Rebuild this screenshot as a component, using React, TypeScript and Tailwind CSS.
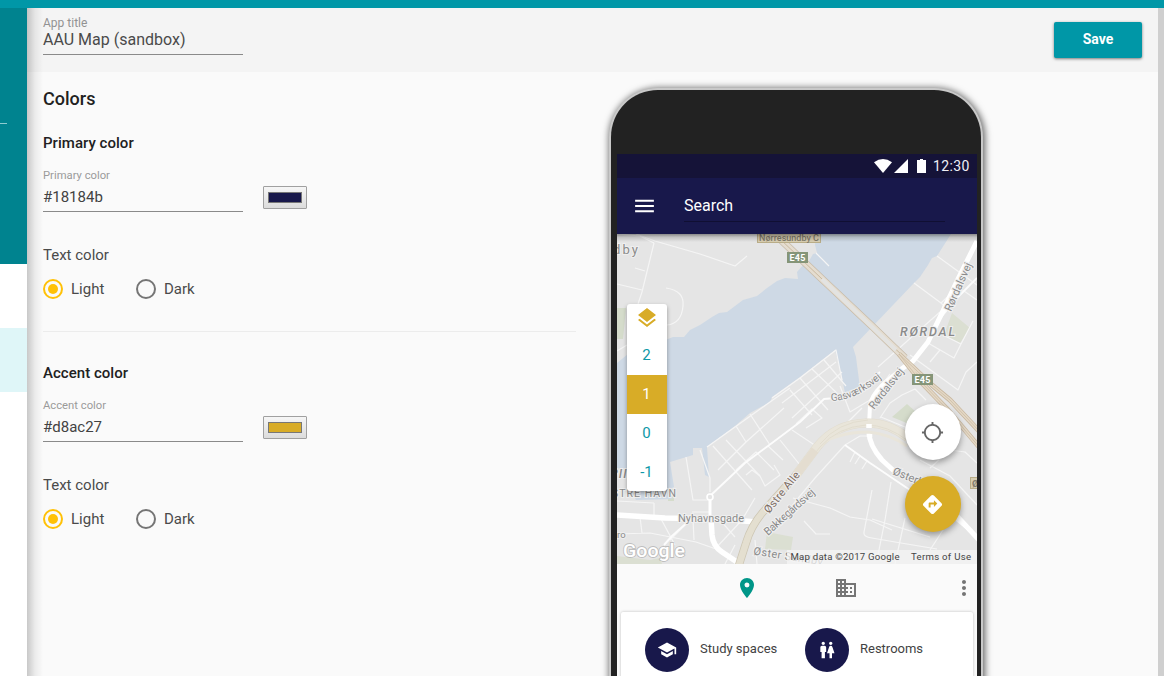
import React from "react";
import {
  MdBusiness,
  MdDirections,
  MdLayers,
  MdLocationSearching,
  MdMenu,
  MdMoreVert,
  MdPlace,
  MdSchool,
  MdWc,
} from "react-icons/md";

function Radio({ label, checked }: { label: string; checked?: boolean }) {
  return (
    <div className="flex items-center gap-2">
      <span
        className={
          checked
            ? "flex size-5 items-center justify-center rounded-full border-2 border-[#ffc107]"
            : "flex size-5 items-center justify-center rounded-full border-2 border-[#757575]"
        }
      >
        {checked && <span className="size-2.5 rounded-full bg-[#ffc107]" />}
      </span>
      <span className="text-[15px] leading-5 text-[#4a4a4a]">{label}</span>
    </div>
  );
}

function ColorSection({ title, value, swatch }: { title: string; value: string; swatch: string }) {
  return (
    <section>
      <h3 className="text-[15px] leading-5 font-medium tracking-[0.03px] text-[#212121]">{title}</h3>
      <div className="mt-[15px] flex gap-5">
        <div className="w-[200px]">
          <div className="h-4 text-[11.25px] leading-[15px] text-[#9a9a9a]">{title}</div>
          <div className="h-7 border-b border-[#8a8a8a] text-[15px] leading-[26px] text-[#424242]">{value}</div>
        </div>
        <div className="mt-[18px] flex h-[23px] w-11 items-center justify-center rounded-[1px] border border-[#a0a0a0] bg-linear-to-b from-[#f6f6f6] to-[#dcdcdc]">
          <div className="h-[11px] w-[34px] border border-[#777]" style={{ backgroundColor: swatch }} />
        </div>
      </div>
      <div className="mt-[33px] text-[15px] leading-5 text-[#4a4a4a]">Text color</div>
      <div className="mt-3.5 flex">
        <div className="w-[93px]">
          <Radio label="Light" checked />
        </div>
        <Radio label="Dark" />
      </div>
    </section>
  );
}

const thinStreets = [
  "M636 234L655 241L700 254L735 266L747 256",
  "M654 243L642 292L638 304",
  "M617 234L640 236L654 243M635 268L645 271",
  "M617 284L642 290",
  "M666 288C680 290 684 297 683 306C682 317 678 324 667 325",
  "M617 351L627 345",
  "M937 256L977 285M914 283L941 303L950 312M941 303L955 290L964 291L977 300",
  "M928 343L954 358L961 344L943 335M954 358L961 344L973 321M928 343L940 350L930 362",
  "M878 367L895 352L915 334L940 312",
  "M772 398L800 378L836 350L842 380",
  "M790 390L812 415M800 378L828 410M812 369L842 398M824 360L846 386M782 403L836 362M792 418L842 372",
  "M707 447L770 402L790 388",
  "M713 446L752 490M726 440L760 476M736 426L746 442L784 408M750 414L770 445M718 470L746 442M736 470L756 452L774 470M700 450L710 478L710 492",
  "M746 475L752 470L760 476L765 486L780 475L774 465M780 440L800 465M792 430L816 446M768 446L783 460M796 424L812 409L822 418L806 428",
  "M686 457L693 500L710 500M617 501L654 503M654 503L654 515M692 512L710 512",
  "M617 534L650 533L696 542L716 549M670 540L680 530L692 518M660 517L675 545M693 519L694 540M640 517L642 533",
  "M715 549L742 520L755 498M720 520L735 537M725 564L735 545",
  "M845 445L815 478L795 502L785 515M845 445L860 436L871 436M855 452L850 462M860 456L855 464M867 461L862 469",
  "M793 498L830 508L850 517L870 520L892 530M804 521L816 534L830 534M872 490L864 532Q863 537 872 538L895 542L937 549",
  "M891 482L885 520L877 560M905 518L895 564M872 519L930 537M930 550L943 530L955 500",
  "M920 460L950 476M930 468L950 450L965 452L977 463M880 418L890 403L902 395L915 389L926 400",
  "M840 386L850 412L870 400M845 425L862 408",
  "M870 405L884 382L890 374M881 417L905 427M910 355L958 390L966 372L977 362",
  "M950 476L977 505M755 540L757 564",
];

const mediumStreets = [
  "M710 496L745 463L772 443L800 422L824 399L836 398L860 391L880 372",
  "M845 445L870 463L907 488L955 519L977 537",
  "M977 278L955 300L935 325",
  "M690 520L672 536L664 545",
];

const mapLabel = { paintOrder: "stroke" as const, stroke: "#efefef", strokeWidth: 2.2 };

function CityMap() {
  return (
    <svg className="block h-[330px] w-[360px] font-['Roboto',sans-serif]" viewBox="617 234 360 330">
      <defs>
        <linearGradient id="topShade" x1="0" y1="0" x2="0" y2="1">
          <stop offset="0" stopColor="#000" stopOpacity="0.4" />
          <stop offset="0.4" stopColor="#000" stopOpacity="0.15" />
          <stop offset="1" stopColor="#000" stopOpacity="0" />
        </linearGradient>
      </defs>
      <rect x="617" y="234" width="360" height="330" fill="#e5e5e5" />
      <g fill="#d5dccb">
        <path d="M617 308L626 308L623 339L617 339Z" />
        <path d="M892 417L907 404L916 412L909 424Z" />
        <path d="M668 489L674 489L674 501L668 501Z" />
      </g>
      <g fill="#dbdfd2">
        <path d="M952 313L970 328L960 343L944 335Z" />
        <path d="M767 532L793 537L791 550L765 549Z" />
        <path d="M617 556L650 560L660 558L662 564L617 564Z" />
      </g>
      <path
        fill="#ced9e5"
        d="M617 363L628 354L655 344L668 339L673 337L684 337L690 330L700 325L712 317L719 313L727 312L735 306L743 300L757 296L767 288L777 281L785 278L798 279L797 272L803 265L809 261L813 254L817 253L815 245L816 234L951 234L944 245L937 256L932 258L928 265L920 277L914 283L853 347L856 357L860 388L845 393L842 377L835 350L800 377L772 397L770 402L750 413L735 426L707 447L709 477L705 475L702 448L693 448L693 455L670 462L674 487L670 489L672 499L636 500L631 490L627 470L617 468Z"
      />
      <g fill="none" stroke="#f5f5f5" strokeWidth="1.2" strokeLinejoin="round">
        {thinStreets.map((d) => (
          <path key={d} d={d} />
        ))}
        <path d="M816 253L829 266" />
      </g>
      <g fill="none" stroke="#fcfcfc" strokeWidth="1.9" strokeLinejoin="round">
        {mediumStreets.map((d) => (
          <path key={d} d={d} />
        ))}
      </g>
      <g fill="none" stroke="#fff" strokeLinejoin="round">
        <path strokeWidth="5" d="M977 241L958 279L941 315L928 342L913 361L900 370" />
        <path strokeWidth="4" d="M903 368C888 379 872 392 870 405L869 426" />
        <path strokeWidth="5" d="M869 432Q869 445 882 460L894 471" />
        <path strokeWidth="3" d="M892 469L920 485L955 516" />
        <path strokeWidth="5" d="M955 514L980 541" />
        <path strokeWidth="5.5" d="M617 515L665 518L720 519L756 522" />
        <path strokeWidth="5.5" d="M711 518L712 535Q713 546 722 552L740 564" />
        <path strokeWidth="3" d="M710 497L710 520" />
      </g>
      <circle cx="710" cy="497" r="3" fill="#e5e5e5" stroke="#fff" strokeWidth="1.6" />

      <g fill="none">
        <path stroke="#e1dccf" strokeWidth="9" d="M796 475L817 447Q835 424 866 423Q888 422 908 438" />
        <path stroke="#e9e5da" strokeWidth="8" d="M796 475L817 447Q835 424 866 423Q888 422 908 438" />
        <path stroke="#e9e5da" strokeWidth="3" d="M814 448Q836 432 868 432Q890 434 907 446" />
        <path stroke="#dfdacc" strokeWidth="0.8" d="M800 472L820 447Q838 427 866 425Q888 425 908 441M820 444Q838 422 868 420" />
        <path stroke="#cdc6b3" strokeWidth="8" d="M738 568L746 543Q751 526 763 512L797 474" />
        <path stroke="#e4dfd0" strokeWidth="6.5" d="M738 568L746 543Q751 526 763 512L797 474" />
        <path stroke="#e4ddd0" strokeWidth="8" d="M796 475L815 450" />
        <path stroke="#fff" strokeWidth="5.5" d="M869 424V428M869.5 434V437" />
      </g>
      <g fill="none" strokeLinejoin="round">
        <path stroke="#c8bcaa" strokeWidth="7.5" d="M779 238L822 279L874 328L905 358" />
        <path stroke="#e5ddd0" strokeWidth="6" d="M779 238L822 279L874 328L905 358" />
        <path stroke="#c9b99f" strokeWidth="1" d="M779 238L822 279L905 358" />
        <path stroke="#c8b79f" strokeWidth="5" d="M899 354L932 385L950 400L980 432M899 354L922 383L948 410L980 448" />
        <path stroke="#e4d8c6" strokeWidth="3.5" d="M899 354L932 385L950 400L980 432M899 354L922 383L948 410L980 448" />
        <path stroke="#c9b99f" strokeWidth="0.7" d="M899 354L932 385L950 400L980 432M899 354L922 383L948 410L980 448" />
        <path stroke="#e3e3e1" strokeWidth="4" d="M822 279L896 350" />
      </g>

      <g>
        <rect x="757.5" y="232" width="63" height="10.5" fill="#d8ceb2" stroke="#b9ad88" />
        <text x="759" y="241" fontSize="9" fontWeight="500" fill="#817c6d" textLength="60">Nørresundby C</text>
        <rect x="787" y="252" width="21" height="11" fill="#859578" />
        <text x="789.5" y="260.7" fontSize="9" fontWeight="700" fill="#fff" textLength="16">E45</text>
        <rect x="912" y="374" width="21" height="11" fill="#859578" />
        <text x="914.5" y="382.7" fontSize="9" fontWeight="700" fill="#fff" textLength="16">E45</text>
        <rect x="970.5" y="477.5" width="14" height="11" fill="#d8ceb2" stroke="#b9ad88" />
        <text x="972" y="487" fontSize="9" fontWeight="700" fill="#817c6d">Ø</text>
      </g>

      <g fill="#8a8a8a" fontSize="11" style={mapLabel}>
        <text x="613" y="254" fontSize="13" textLength="25">dby</text>
        <text x="900" y="335.5" fontSize="12.5" fontStyle="italic" fontWeight="500" textLength="55">RØRDAL</text>
        <text x="610" y="477.5" fontSize="12.5" fontStyle="italic" fontWeight="500" letterSpacing="1">PII</text>
        <text x="612" y="497" fontSize="10.5" textLength="64">STRE HAVN</text>
        <text x="678" y="521.5" textLength="66">Nyhavnsgade</text>
        <text x="617" y="538" fontSize="9.5">ro</text>
        <text transform="translate(951 312) rotate(-66)" textLength="52">Rørdalsvej</text>
        <text transform="translate(874 410) rotate(-52)" textLength="49">Rørdalsvej</text>
        <path id="gas" d="M831 401Q857 401 886 374" fill="none" stroke="none" />
        <text fontSize="10.5">
          <textPath href="#gas" textLength="57">Gasværksvej</textPath>
        </text>
        <text transform="translate(768 536) rotate(-42)" textLength="64">Bakkegårdsvej</text>
        <text transform="translate(892 474) rotate(22)">Østerbro</text>
        <text transform="translate(753 554.5) rotate(9)" textLength="70">Øster Sundby</text>
        <text transform="translate(769 514) rotate(-51)" fill="#7d6c62" textLength="50">Østre Alle</text>
      </g>

      <rect x="787" y="550" width="190" height="14" fill="#f5f5f5" fillOpacity="0.72" />
      <text x="790.5" y="560" fontSize="9.6" fill="#444" textLength="109">Map data ©2017 Google</text>
      <text x="911" y="560" fontSize="9.6" fill="#444" textLength="60">Terms of Use</text>
      <text
        x="623"
        y="557"
        fontSize="19"
        fontWeight="500"
        fill="#fff"
        stroke="#8d8d8d"
        strokeOpacity="0.45"
        strokeWidth="1.8"
        style={{ paintOrder: "stroke" }}
        textLength="62"
        lengthAdjust="spacingAndGlyphs"
      >
        Google
      </text>
      <rect x="617" y="234" width="360" height="8" fill="url(#topShade)" />
    </svg>
  );
}

function LevelPicker() {
  return (
    <div className="absolute top-[70px] left-2.5 flex w-10 flex-col overflow-hidden rounded-[3px] bg-white pr-px text-center text-[15px] leading-[39px] text-[#0e98a7] shadow-[0_2px_4px_rgba(0,0,0,0.35)]">
      <div className="-mr-px flex h-8 items-center justify-center pb-1">
        <MdLayers className="size-6 text-[#d8ac27]" />
      </div>
      <div className="h-[39px]">2</div>
      <div className="-mr-px h-[39px] bg-[#d8ac27] pr-px text-white">1</div>
      <div className="h-[39px]">0</div>
      <div className="h-[38px]">-1</div>
    </div>
  );
}

function Category({ icon, label }: { icon: React.ReactNode; label: string }) {
  return (
    <div className="flex w-40 items-center gap-[11px]">
      <span className="flex size-11 items-center justify-center rounded-full bg-[#18184b] text-white">{icon}</span>
      <span className="pb-0.5 text-[13px] text-[#424242]">{label}</span>
    </div>
  );
}

function Phone() {
  return (
    <div className="mt-[18px] h-[700px] w-[370px] shrink-0 rounded-t-[47px] bg-[#222] pt-16 pr-1 pl-1.5 shadow-[0_0_0_2px_#c9c9c9,1px_1px_7px_3px_rgba(0,0,0,0.6)]">
      <div className="bg-[#fafafa]">
        <div className="flex h-6 items-center bg-[#151338] pl-[257px]">
          <svg className="h-3.5 w-[18px] fill-white" viewBox="0 0 18 14">
            <path d="M0 3.2Q9 -3.2 18 3.2L9 14Z" />
          </svg>
          <svg className="ml-0.5 h-3.5 w-3.5 fill-white" viewBox="0 0 14 14">
            <path d="M14 0V14H0Z" />
          </svg>
          <svg className="ml-[9px] h-3.5 w-[9px] fill-white" viewBox="0 0 9 14">
            <path d="M3 0H6V1H9V14H0V1H3Z" />
          </svg>
          <span className="ml-[7px] text-sm tracking-[0.35px] text-[#f0f0f6]">12:30</span>
        </div>
        <div className="flex h-14 items-center bg-[#18184b] pl-[15px] text-white">
          <MdMenu className="size-[25px] -translate-y-[0.5px]" />
          <div className="ml-[27px] h-8 w-[261px] border-b border-[#100f33] text-base leading-[31px]">Search</div>
        </div>
        <div className="relative">
          <CityMap />
          <LevelPicker />
          <div className="absolute top-[170px] right-4 flex size-14 items-center justify-center rounded-full bg-white pr-px text-[#666] shadow-[0_3px_6px_rgba(0,0,0,0.35)]">
            <MdLocationSearching className="size-[23px]" />
          </div>
          <div className="absolute top-[242px] right-4 flex size-14 items-center justify-center rounded-full bg-[#d8ac27] pr-px text-white shadow-[0_3px_6px_rgba(0,0,0,0.35)]">
            <MdDirections className="size-[23px]" />
          </div>
        </div>
        <div className="flex h-12 items-center text-[#757575]">
          <MdPlace className="ml-[118px] size-6 text-[#009688]" />
          <MdBusiness className="ml-[75px] size-6" />
          <MdMoreVert className="ml-[94px] size-6" />
        </div>
        <div className="mx-1 flex h-20 rounded-[2px] bg-white pt-4 pl-6 shadow-[0_0_3px_rgba(0,0,0,0.25)]">
          <div className="flex h-11">
            <Category icon={<MdSchool className="size-5" />} label="Study spaces" />
            <Category icon={<MdWc className="size-5" />} label="Restrooms" />
          </div>
        </div>
      </div>
    </div>
  );
}

export default function App() {
  return (
    <div className="flex h-screen flex-col overflow-hidden bg-[#fafafa] font-['Roboto',sans-serif]">
      <div className="h-2 shrink-0 bg-[#0097a7]" />
      <div className="flex min-h-0 flex-1">
        <aside className="flex w-[27px] shrink-0 flex-col bg-white">
          <div className="h-64 bg-[#00838f] pt-[115px]">
            <div className="h-px w-[7px] bg-[#8fcbd0]" />
          </div>
          <div className="h-16" />
          <div className="h-16 bg-[#dff6f8]" />
        </aside>
        <main className="relative flex min-w-0 flex-1 flex-col">
          <header className="flex h-16 shrink-0 items-start justify-between bg-[#f4f4f4] pr-4 pl-4">
            <div className="w-[200px] pt-[7px]">
              <div className="h-4 text-xs leading-4 text-[#929292]">App title</div>
              <div className="h-6 border-b border-[#8a8a8a] text-base leading-[17px] text-[#4a4a4a]">AAU Map (sandbox)</div>
            </div>
            <button className="mt-3.5 h-9 w-[88px] rounded-[2px] bg-[#0097a7] pb-0.5 text-sm font-bold text-white shadow-[0_1px_3px_rgba(0,0,0,0.5)]">
              Save
            </button>
          </header>
          <div className="flex min-h-0 flex-1 items-start overflow-hidden pl-4">
            <div className="w-[533px] shrink-0 pt-[15px]">
              <h2 className="mb-[22px] text-lg leading-6 font-medium text-[#212121]">Colors</h2>
              <ColorSection title="Primary color" value="#18184b" swatch="#18184b" />
              <hr className="mt-8 mb-[31px] border-t border-[#ececec]" />
              <ColorSection title="Accent color" value="#d8ac27" swatch="#d8ac27" />
            </div>
            <div className="ml-[35px]">
              <Phone />
            </div>
          </div>
          <div className="pointer-events-none absolute inset-y-0 left-0 w-4 bg-linear-to-r from-black/20 via-black/6 to-transparent" />
        </main>
        <div className="w-1.5 shrink-0 bg-[#cfcfcf]" />
      </div>
    </div>
  );
}
